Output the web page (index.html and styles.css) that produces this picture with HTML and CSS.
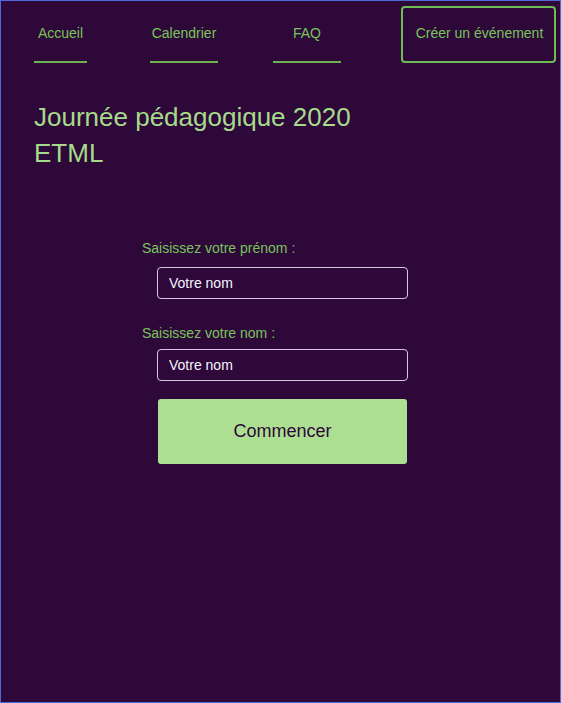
FILE: index.html
```html
<!DOCTYPE html>
<html lang="fr">
<head>
<meta charset="utf-8">
<title>Journée pédagogique 2020 ETML</title>
<link rel="stylesheet" href="styles.css">
</head>
<body>
  <header class="nav">
    <a class="nav-link link-home" href="#">Accueil</a>
    <a class="nav-link link-cal" href="#">Calendrier</a>
    <a class="nav-link link-faq" href="#">FAQ</a>
    <a class="nav-create" href="#">Créer un événement</a>
  </header>
  <h1 class="title">Journée pédagogique 2020 ETML</h1>
  <form class="form">
    <label class="label label-first" for="prenom">Saisissez votre prénom :</label>
    <input class="input input-first" id="prenom" type="text" placeholder="Votre nom">
    <label class="label label-second" for="nom">Saisissez votre nom :</label>
    <input class="input input-second" id="nom" type="text" placeholder="Votre nom">
    <button class="start" type="button">Commencer</button>
  </form>
</body>
</html>
```

FILE: styles.css
```css
html {
  background: #2e0839;
}
body {
  margin: 0;
  min-height: 100vh;
  box-sizing: border-box;
  border: 1px solid #4d6bd8;
  background: #2e0839;
  font-family: "Liberation Sans", Arial, sans-serif;
}
.nav {
  display: flex;
  align-items: flex-start;
  padding-top: 5px;
}
.nav-link {
  display: block;
  box-sizing: border-box;
  padding: 19px 0 20px;
  line-height: 16px;
  font-size: 14px;
  color: #78c45b;
  text-decoration: none;
  text-align: center;
  border-bottom: 2px solid #6cb24f;
}
.link-home {
  margin-left: 33px;
  width: 53px;
}
.link-cal {
  margin-left: 63px;
  width: 68px;
}
.link-faq {
  margin-left: 55px;
  width: 68px;
}
.nav-create {
  display: block;
  box-sizing: border-box;
  margin-left: 60px;
  width: 155px;
  padding: 17px 0 20px 2px;
  line-height: 16px;
  font-size: 14px;
  color: #78c45b;
  text-decoration: none;
  text-align: center;
  border: 2px solid #6fbb55;
  border-radius: 4px;
}
.title {
  margin: 36px 0 0 33px;
  max-width: 340px;
  font-size: 26px;
  line-height: 36px;
  font-weight: normal;
  color: #a6db8b;
}
.form {
  display: flex;
  flex-direction: column;
  align-items: flex-start;
  margin: 69px 0 0 141px;
}
.label {
  display: block;
  font-size: 14px;
  line-height: 16px;
  color: #78c45b;
}
.label-second {
  margin-top: 26px;
}
.input {
  display: block;
  box-sizing: border-box;
  margin-left: 15px;
  width: 251px;
  height: 32px;
  padding: 0 10px 0 11px;
  border: 1px solid #d6c6df;
  border-radius: 4px;
  background: transparent;
  color: #f4f4ff;
  font-family: "Liberation Sans", Arial, sans-serif;
  font-size: 14px;
  outline: none;
}
.input::placeholder {
  color: #f4f4ff;
  opacity: 1;
}
.input-first {
  margin-top: 11px;
}
.input-second {
  margin-top: 8px;
}
.start {
  display: block;
  margin: 18px 0 0 16px;
  width: 249px;
  height: 65px;
  border: none;
  border-radius: 3px;
  background: #addf93;
  color: #2e0839;
  font-family: "Liberation Sans", Arial, sans-serif;
  font-size: 18px;
  cursor: pointer;
}
```
